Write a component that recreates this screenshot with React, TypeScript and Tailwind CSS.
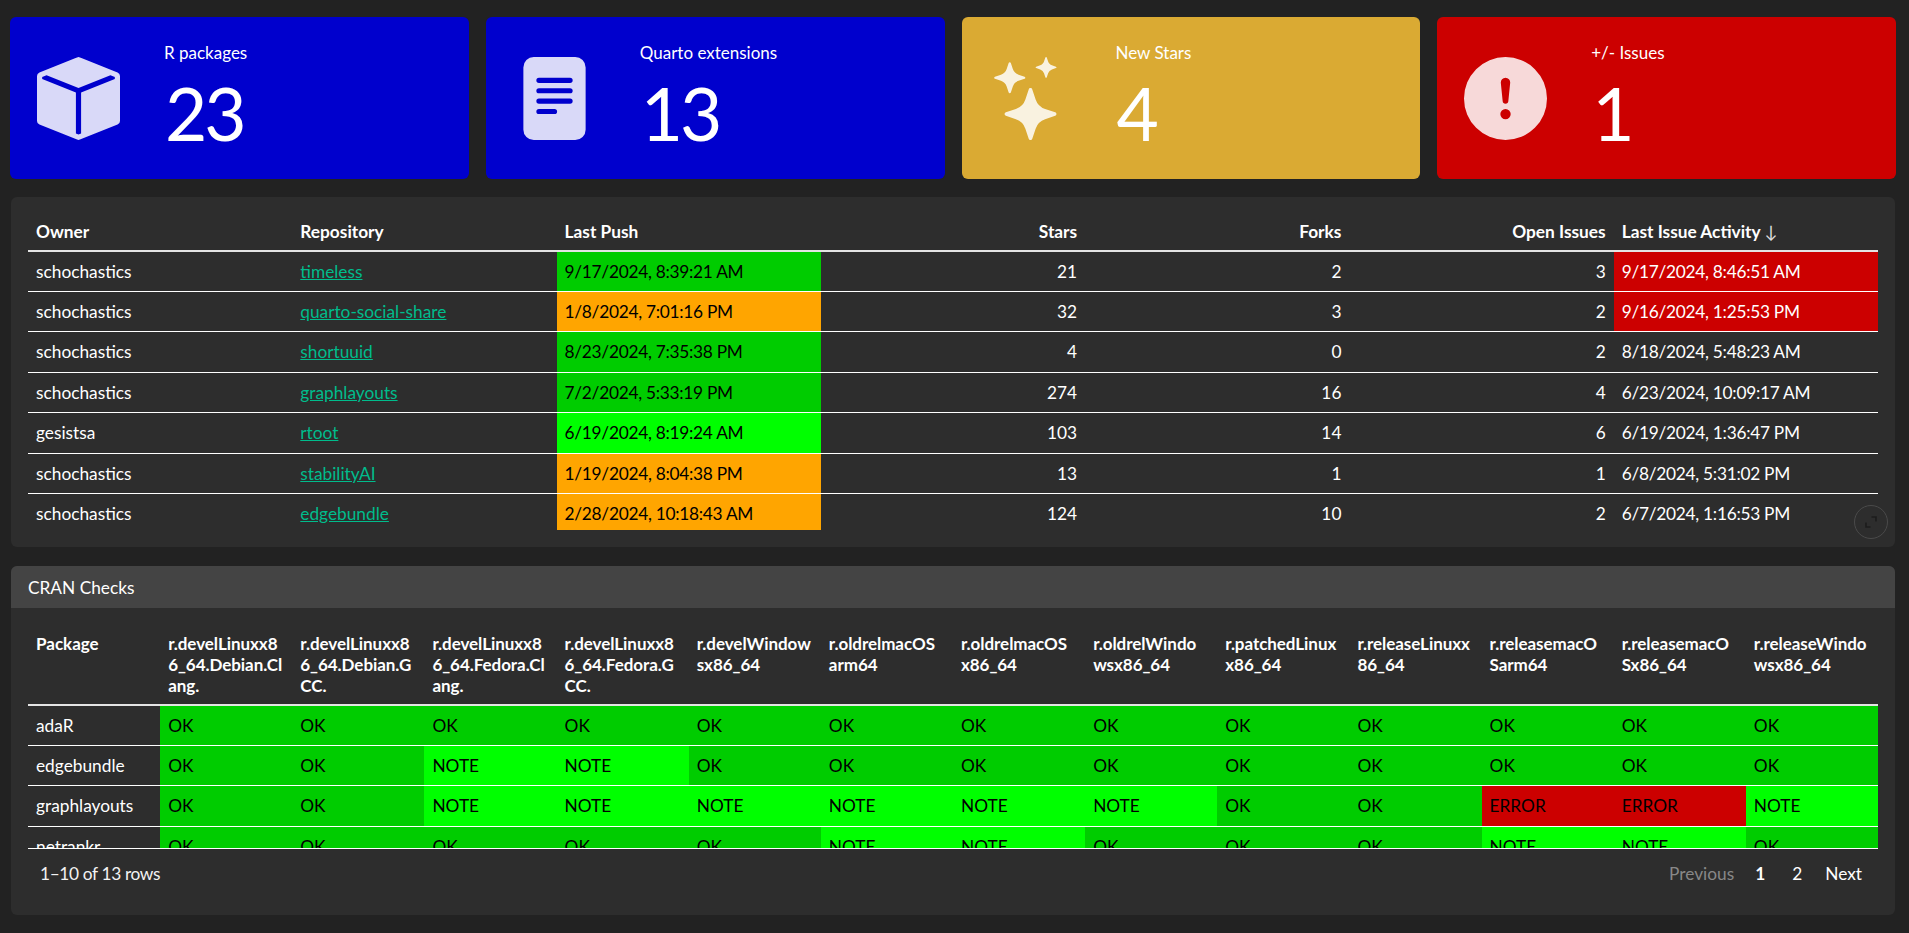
import React from "react";
import { BsBoxFill, BsFileTextFill, BsStars, BsExclamationCircleFill } from "react-icons/bs";

const G = "bg-[#00cc00] text-black";
const B = "bg-[#00ff00] text-black";
const O = "bg-[#ffa500] text-black";
const R = "bg-[#cc0000] text-white";

const repos = [
  ["schochastics", "timeless", "9/17/2024, 8:39:21 AM", G, "21", "2", "3", "9/17/2024, 8:46:51 AM", R],
  ["schochastics", "quarto-social-share", "1/8/2024, 7:01:16 PM", O, "32", "3", "2", "9/16/2024, 1:25:53 PM", R],
  ["schochastics", "shortuuid", "8/23/2024, 7:35:38 PM", G, "4", "0", "2", "8/18/2024, 5:48:23 AM", ""],
  ["schochastics", "graphlayouts", "7/2/2024, 5:33:19 PM", G, "274", "16", "4", "6/23/2024, 10:09:17 AM", ""],
  ["gesistsa", "rtoot", "6/19/2024, 8:19:24 AM", B, "103", "14", "6", "6/19/2024, 1:36:47 PM", ""],
  ["schochastics", "stabilityAI", "1/19/2024, 8:04:38 PM", O, "13", "1", "1", "6/8/2024, 5:31:02 PM", ""],
  ["schochastics", "edgebundle", "2/28/2024, 10:18:43 AM", O, "124", "10", "2", "6/7/2024, 1:16:53 PM", ""],
];

const checkCols = [
  "r.develLinuxx86_64.Debian.Clang.",
  "r.develLinuxx86_64.Debian.GCC.",
  "r.develLinuxx86_64.Fedora.Clang.",
  "r.develLinuxx86_64.Fedora.GCC.",
  "r.develWindowsx86_64",
  "r.oldrelmacOS|arm64",
  "r.oldrelmacOS|x86_64",
  "r.oldrelWindowsx86_64",
  "r.patchedLinuxx86_64",
  "r.releaseLinuxx86_64",
  "r.releasemacOSarm64",
  "r.releasemacOSx86_64",
  "r.releaseWindowsx86_64",
];

const checks: [string, string[]][] = [
  ["adaR", "OK OK OK OK OK OK OK OK OK OK OK OK OK".split(" ")],
  ["edgebundle", "OK OK NOTE NOTE OK OK OK OK OK OK OK OK OK".split(" ")],
  ["graphlayouts", "OK OK NOTE NOTE NOTE NOTE NOTE NOTE OK OK ERROR ERROR NOTE".split(" ")],
  ["netrankr", "OK OK OK OK OK NOTE NOTE OK OK OK NOTE NOTE OK".split(" ")],
];

function statusClass(s: string) {
  if (s === "OK") return "bg-[#00cc00]";
  if (s === "NOTE") return "bg-[#00ff00]";
  return "bg-[#cc0000]";
}

function ValueBox({ bg, icon, title, value }: { bg: string; icon: React.ReactNode; title: string; value: string }) {
  return (
    <div className={`${bg} flex-1 h-[162px] rounded-[6px] flex items-center text-white`}>
      <div className="w-[137px] flex justify-center items-center text-[83px] text-white/85">{icon}</div>
      <div className="pl-[17px] h-full pt-[24px]">
        <div className="text-[17px] leading-[24px]">{title}</div>
        <div className="text-[73px] leading-[84px] mt-[6px] ml-[1px] tracking-[-3px]">{value}</div>
      </div>
    </div>
  );
}

const th = "px-2 leading-[21px] font-bold border-b-2 border-[#e4e4e4] align-top";
const td = "px-2 pt-[8px] pb-[7.4px] h-[40.4px] leading-[24px] border-b border-white align-middle";
const date = "tracking-[-0.27px]";

export default function App() {
  return (
    <div className="h-[933px] overflow-hidden bg-[#222222] text-white text-[17.3px] font-['Lato',sans-serif]">
      <div className="flex gap-[17px] pl-[10px] pr-[13px] pt-[17px]">
        <ValueBox bg="bg-[#0000cd]" icon={<BsBoxFill />} title="R packages" value="23" />
        <ValueBox bg="bg-[#0000cd]" icon={<BsFileTextFill />} title="Quarto extensions" value="13" />
        <ValueBox bg="bg-[#daaa33]" icon={<BsStars />} title="New Stars" value="4" />
        <ValueBox bg="bg-[#cc0000]" icon={<BsExclamationCircleFill />} title="+/- Issues" value="1" />
      </div>

      <div className="relative ml-[11px] mr-[14px] mt-[18px] h-[350px] rounded-[6px] bg-[#2d2d2d] p-[17px]">
        <div className="h-[316px] overflow-hidden">
          <table className="w-full table-fixed border-separate border-spacing-0">
            <thead>
              <tr>
                <th className={`${th} pt-[7px] pb-[7.6px] text-left`}>Owner</th>
                <th className={`${th} pt-[7px] pb-[7.6px] text-left`}>Repository</th>
                <th className={`${th} pt-[7px] pb-[7.6px] text-left`}>Last Push</th>
                <th className={`${th} pt-[7px] pb-[7.6px] text-right`}>Stars</th>
                <th className={`${th} pt-[7px] pb-[7.6px] text-right`}>Forks</th>
                <th className={`${th} pt-[7px] pb-[7.6px] text-right`}>Open Issues</th>
                <th className={`${th} pt-[7px] pb-[7.6px] text-left`}>
                  Last Issue Activity <span className="font-normal text-[#dddddd]">↓</span>
                </th>
              </tr>
            </thead>
            <tbody>
              {repos.map((r) => (
                <tr key={r[1]}>
                  <td className={td}>{r[0]}</td>
                  <td className={td}>
                    <a href="#" className="text-[#00bc8c] underline">{r[1]}</a>
                  </td>
                  <td className={`${td} ${date} ${r[3]}`}>{r[2]}</td>
                  <td className={`${td} text-right`}>{r[4]}</td>
                  <td className={`${td} text-right`}>{r[5]}</td>
                  <td className={`${td} text-right`}>{r[6]}</td>
                  <td className={`${td} ${date} ${r[8]}`}>{r[7]}</td>
                </tr>
              ))}
            </tbody>
          </table>
        </div>
        <div className="absolute right-[7px] bottom-[8px] w-[34px] h-[34px] rounded-full border border-[#4a4a4a] flex items-center justify-center">
          <svg width="14" height="14" viewBox="0 0 14 14" fill="none" stroke="#1c1c1c" strokeWidth="1.6">
            <path d="M7.5 2h4.5v4.5M6.5 12H2V7.5" />
          </svg>
        </div>
      </div>

      <div className="ml-[11px] mr-[14px] mt-[19px] h-[349px] rounded-[6px] bg-[#2d2d2d] overflow-hidden">
        <div className="h-[42px] bg-[#444444] px-[17px] pt-[1px] flex items-center">CRAN Checks</div>
        <div className="px-[17px] pt-[17px]">
          <div className="h-[224px] overflow-hidden border-b border-white">
            <table className="w-full table-fixed border-separate border-spacing-0">
              <thead>
                <tr>
                  <th className={`${th} pt-2 pb-[7.6px] text-left text-[17px]`}>Package</th>
                  {checkCols.map((c) => {
                    const parts = c.split("|");
                    return (
                      <th
                        key={c}
                        className={`${th} pt-2 pb-[7.6px] text-left text-[17px] tracking-[-0.05px] ${
                          parts.length > 1 ? "break-normal" : "break-all"
                        }`}
                      >
                        {parts.length > 1 ? (
                          <>
                            {parts[0]}
                            <wbr />
                            {parts[1]}
                          </>
                        ) : (
                          c
                        )}
                      </th>
                    );
                  })}
                </tr>
              </thead>
              <tbody>
                {checks.map(([name, vals]) => (
                  <tr key={name}>
                    <td className={td}>{name}</td>
                    {vals.map((v, i) => (
                      <td key={i} className={`${td} text-black ${statusClass(v)}`}>{v}</td>
                    ))}
                  </tr>
                ))}
              </tbody>
            </table>
          </div>
          <div className="flex justify-between items-center pl-3 pr-[16px] pt-[12px]">
            <div className="text-[#f2f2f2] tracking-[-0.35px]">1–10 of 13 rows</div>
            <div className="flex items-center">
              <span className="text-[#888888] mr-[21px]">Previous</span>
              <span className="font-bold mr-[27px]">1</span>
              <span className="mr-[23px]">2</span>
              <span>Next</span>
            </div>
          </div>
        </div>
      </div>
    </div>
  );
}
